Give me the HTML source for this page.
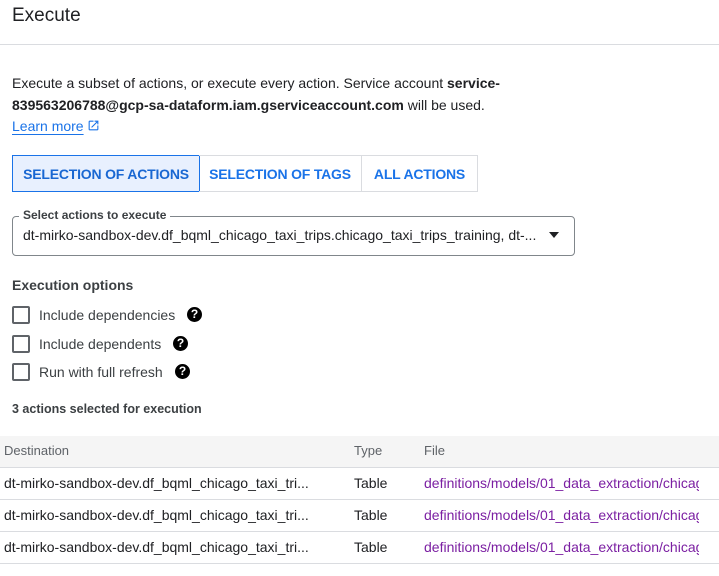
<!DOCTYPE html>
<html><head><style>
*{box-sizing:border-box;margin:0;padding:0}
body{width:719px;height:576px;overflow:hidden;background:#fff;font-family:"Liberation Sans",Arial,sans-serif;color:#202124;position:relative}
.a{position:absolute;white-space:nowrap}
.btn{position:absolute;top:155px;height:37px;border:1px solid #dadce0;color:#1a73e8;font-size:14px;font-weight:bold;display:flex;align-items:center;justify-content:center;letter-spacing:-0.2px}
.cb{position:absolute;left:12px;width:18px;height:18px;border:2px solid #5f6368;border-radius:2px}
.q{position:absolute;width:15px;height:15px;border-radius:50%;background:#000;color:#fff;font-size:12px;font-weight:bold;text-align:center;line-height:15px}
.row{position:absolute;left:0;width:719px;height:32px;border-bottom:1px solid #dadce0;font-size:14px}
.row span{position:absolute;top:7px}
.lnk{color:#7b1fa2;text-decoration:underline;text-underline-offset:3px;width:275px;overflow:hidden;display:block}
</style></head><body>
<div class="a" style="left:12px;top:5px;font-size:19px">Execute</div>
<div class="a" style="left:0;top:44px;width:719px;height:1px;background:#dadce0"></div>
<div class="a" style="left:12px;top:73px;font-size:14px;line-height:21.5px">Execute a subset of actions, or execute every action. Service account <b>service-</b><br><b>839563206788@gcp-sa-dataform.iam.gserviceaccount.com</b> will be used.<br><span style="color:#1a73e8;text-decoration:underline;text-underline-offset:3px">Learn more</span> <svg width="13" height="13" viewBox="0 0 24 24" style="vertical-align:-1px"><path d="M19 19H5V5h7V3H5a2 2 0 0 0-2 2v14a2 2 0 0 0 2 2h14c1.1 0 2-.9 2-2v-7h-2v7zM14 3v2h3.59l-9.830 9.83 1.41 1.41L19 6.41V10h2V3h-7z" fill="#1a73e8"/></svg></div>
<div class="btn" style="left:12px;width:188px;background:#e8f0fe;border-color:#1a73e8;color:#1967d2">SELECTION OF ACTIONS</div>
<div class="btn" style="left:199px;width:163px;border-left:none">SELECTION OF TAGS</div>
<div class="btn" style="left:361px;width:117px">ALL ACTIONS</div>
<div class="a" style="left:12px;top:216px;width:563px;height:40px;border:1px solid #80868b;border-radius:4px"></div>
<div class="a" style="left:19px;top:208px;background:#fff;padding:0 4px;font-size:12px;font-weight:bold;color:#3c4043">Select actions to execute</div>
<div class="a" style="left:23px;top:227px;font-size:14px">dt-mirko-sandbox-dev.df_bqml_chicago_taxi_trips.chicago_taxi_trips_training, dt-...</div>
<svg class="a" style="left:548px;top:231px" width="12" height="8" viewBox="0 0 12 8"><path d="M1 1h10L6 7z" fill="#202124"/></svg>
<div class="a" style="left:12px;top:277px;font-size:14px;font-weight:bold;color:#3c4043">Execution options</div>
<div class="cb" style="top:306px"></div><div class="a" style="left:39px;top:307px;font-size:14px;color:#3c4043">Include dependencies</div><div class="q" style="left:187px;top:307px">?</div>
<div class="cb" style="top:335px"></div><div class="a" style="left:39px;top:336px;font-size:14px;color:#3c4043">Include dependents</div><div class="q" style="left:173px;top:336px">?</div>
<div class="cb" style="top:363px"></div><div class="a" style="left:39px;top:364px;font-size:14px;color:#3c4043">Run with full refresh</div><div class="q" style="left:175px;top:364px">?</div>
<div class="a" style="left:12px;top:402px;font-size:12.5px;font-weight:bold;color:#3c4043">3 actions selected for execution</div>
<div class="row" style="top:436px;background:#f5f5f5;color:#5f6368;font-size:13px"><span style="left:4px">Destination</span><span style="left:354px">Type</span><span style="left:424px">File</span></div>
<div class="row" style="top:468px"><span style="left:4px">dt-mirko-sandbox-dev.df_bqml_chicago_taxi_tri...</span><span style="left:354px">Table</span><span class="lnk" style="left:424px">definitions/models/01_data_extraction/chicago</span></div>
<div class="row" style="top:500px"><span style="left:4px">dt-mirko-sandbox-dev.df_bqml_chicago_taxi_tri...</span><span style="left:354px">Table</span><span class="lnk" style="left:424px">definitions/models/01_data_extraction/chicago</span></div>
<div class="row" style="top:532px"><span style="left:4px">dt-mirko-sandbox-dev.df_bqml_chicago_taxi_tri...</span><span style="left:354px">Table</span><span class="lnk" style="left:424px">definitions/models/01_data_extraction/chicago</span></div>
</body></html>
